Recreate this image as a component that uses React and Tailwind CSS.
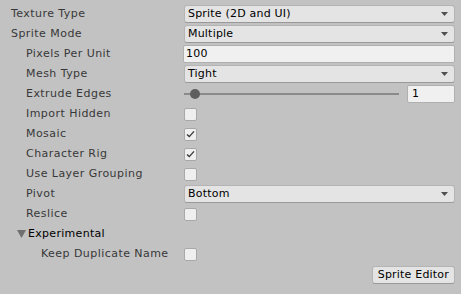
const font = { fontFamily: '"DejaVu Sans", Verdana, sans-serif' };

function Arrow() {
  return (
    <svg width="7" height="4" viewBox="0 0 7 4" className="shrink-0">
      <path d="M0 0 H7 L3.5 4 Z" fill="#4f4f4f" />
    </svg>
  );
}

function Dropdown({ value }) {
  return (
    <div className="flex-1 h-[18px] flex items-center justify-between pl-[3px] pr-[6px] bg-[#e4e4e4] border border-[#b4b4b4] border-b-[#999999] rounded-[3px] text-black tracking-[0.2px]">
      <span>{value}</span>
      <Arrow />
    </div>
  );
}

function TextField({ value, className = '' }) {
  return (
    <div className={`h-[18px] flex items-center pl-[2px] bg-[#f0f0f0] border border-[#b0b0b0] rounded-[2px] text-black tracking-[0.2px] ${className}`}>
      {value}
    </div>
  );
}

function Checkbox({ checked }) {
  return (
    <div className="w-[13px] h-[13px] flex items-center justify-center bg-[#efefef] border border-[#a8a8a8] rounded-[2px]">
      {checked && (
        <svg width="9" height="8" viewBox="0 0 9 8">
          <path d="M1 4.5 L3.3 6.6 L8 1.4" fill="none" stroke="#3a3a3a" strokeWidth="1.4" />
        </svg>
      )}
    </div>
  );
}

function Row({ label, indent = 0, children }) {
  const pad = indent === 0 ? 'pl-[11px]' : indent === 1 ? 'pl-[26px]' : 'pl-[41px]';
  return (
    <div className="h-5 flex items-center">
      <div className={`w-[184px] shrink-0 text-[#383838] tracking-[0.45px] ${pad}`}>{label}</div>
      <div className="flex-1 flex items-center">{children}</div>
    </div>
  );
}

export default function App() {
  return (
    <div className="w-[461px] h-[294px] bg-[#c2c2c2] pt-1 pr-[6px] text-[11px] overflow-hidden" style={font}>
      <Row label="Texture Type"><Dropdown value="Sprite (2D and UI)" /></Row>
      <Row label="Sprite Mode"><Dropdown value="Multiple" /></Row>
      <Row label="Pixels Per Unit" indent={1}><TextField value="100" className="flex-1 -ml-px" /></Row>
      <Row label="Mesh Type" indent={1}><Dropdown value="Tight" /></Row>
      <Row label="Extrude Edges" indent={1}>
        <div className="flex-1 flex items-center gap-2">
          <div className="relative flex-1 h-[18px] flex items-center">
            <div className="w-full h-[2px] bg-[#8a8a8a]" />
            <div className="absolute left-[6px] w-[10px] h-[10px] rounded-full bg-[#5e5e5e]" />
          </div>
          <TextField value="1" className="w-[48px] pl-[4px]" />
        </div>
      </Row>
      <Row label="Import Hidden" indent={1}><Checkbox /></Row>
      <Row label="Mosaic" indent={1}><Checkbox checked /></Row>
      <Row label="Character Rig" indent={1}><Checkbox checked /></Row>
      <Row label="Use Layer Grouping" indent={1}><Checkbox /></Row>
      <Row label="Pivot" indent={1}><Dropdown value="Bottom" /></Row>
      <Row label="Reslice" indent={1}><Checkbox /></Row>
      <div className="h-5 flex items-center pl-[17px] gap-[2px] text-black tracking-[0.3px]">
        <svg width="9" height="8" viewBox="0 0 9 8">
          <path d="M0 0 H9 L4.5 8 Z" fill="#6f6f6f" />
        </svg>
        <span>Experimental</span>
      </div>
      <Row label="Keep Duplicate Name" indent={2}><Checkbox /></Row>
      <div className="flex justify-end mt-[2px]">
        <div className="h-[18px] px-[5px] flex items-center bg-[#e4e4e4] border border-[#b4b4b4] border-b-[#999999] rounded-[3px] text-black tracking-[0.2px]">
          Sprite Editor
        </div>
      </div>
    </div>
  );
}
